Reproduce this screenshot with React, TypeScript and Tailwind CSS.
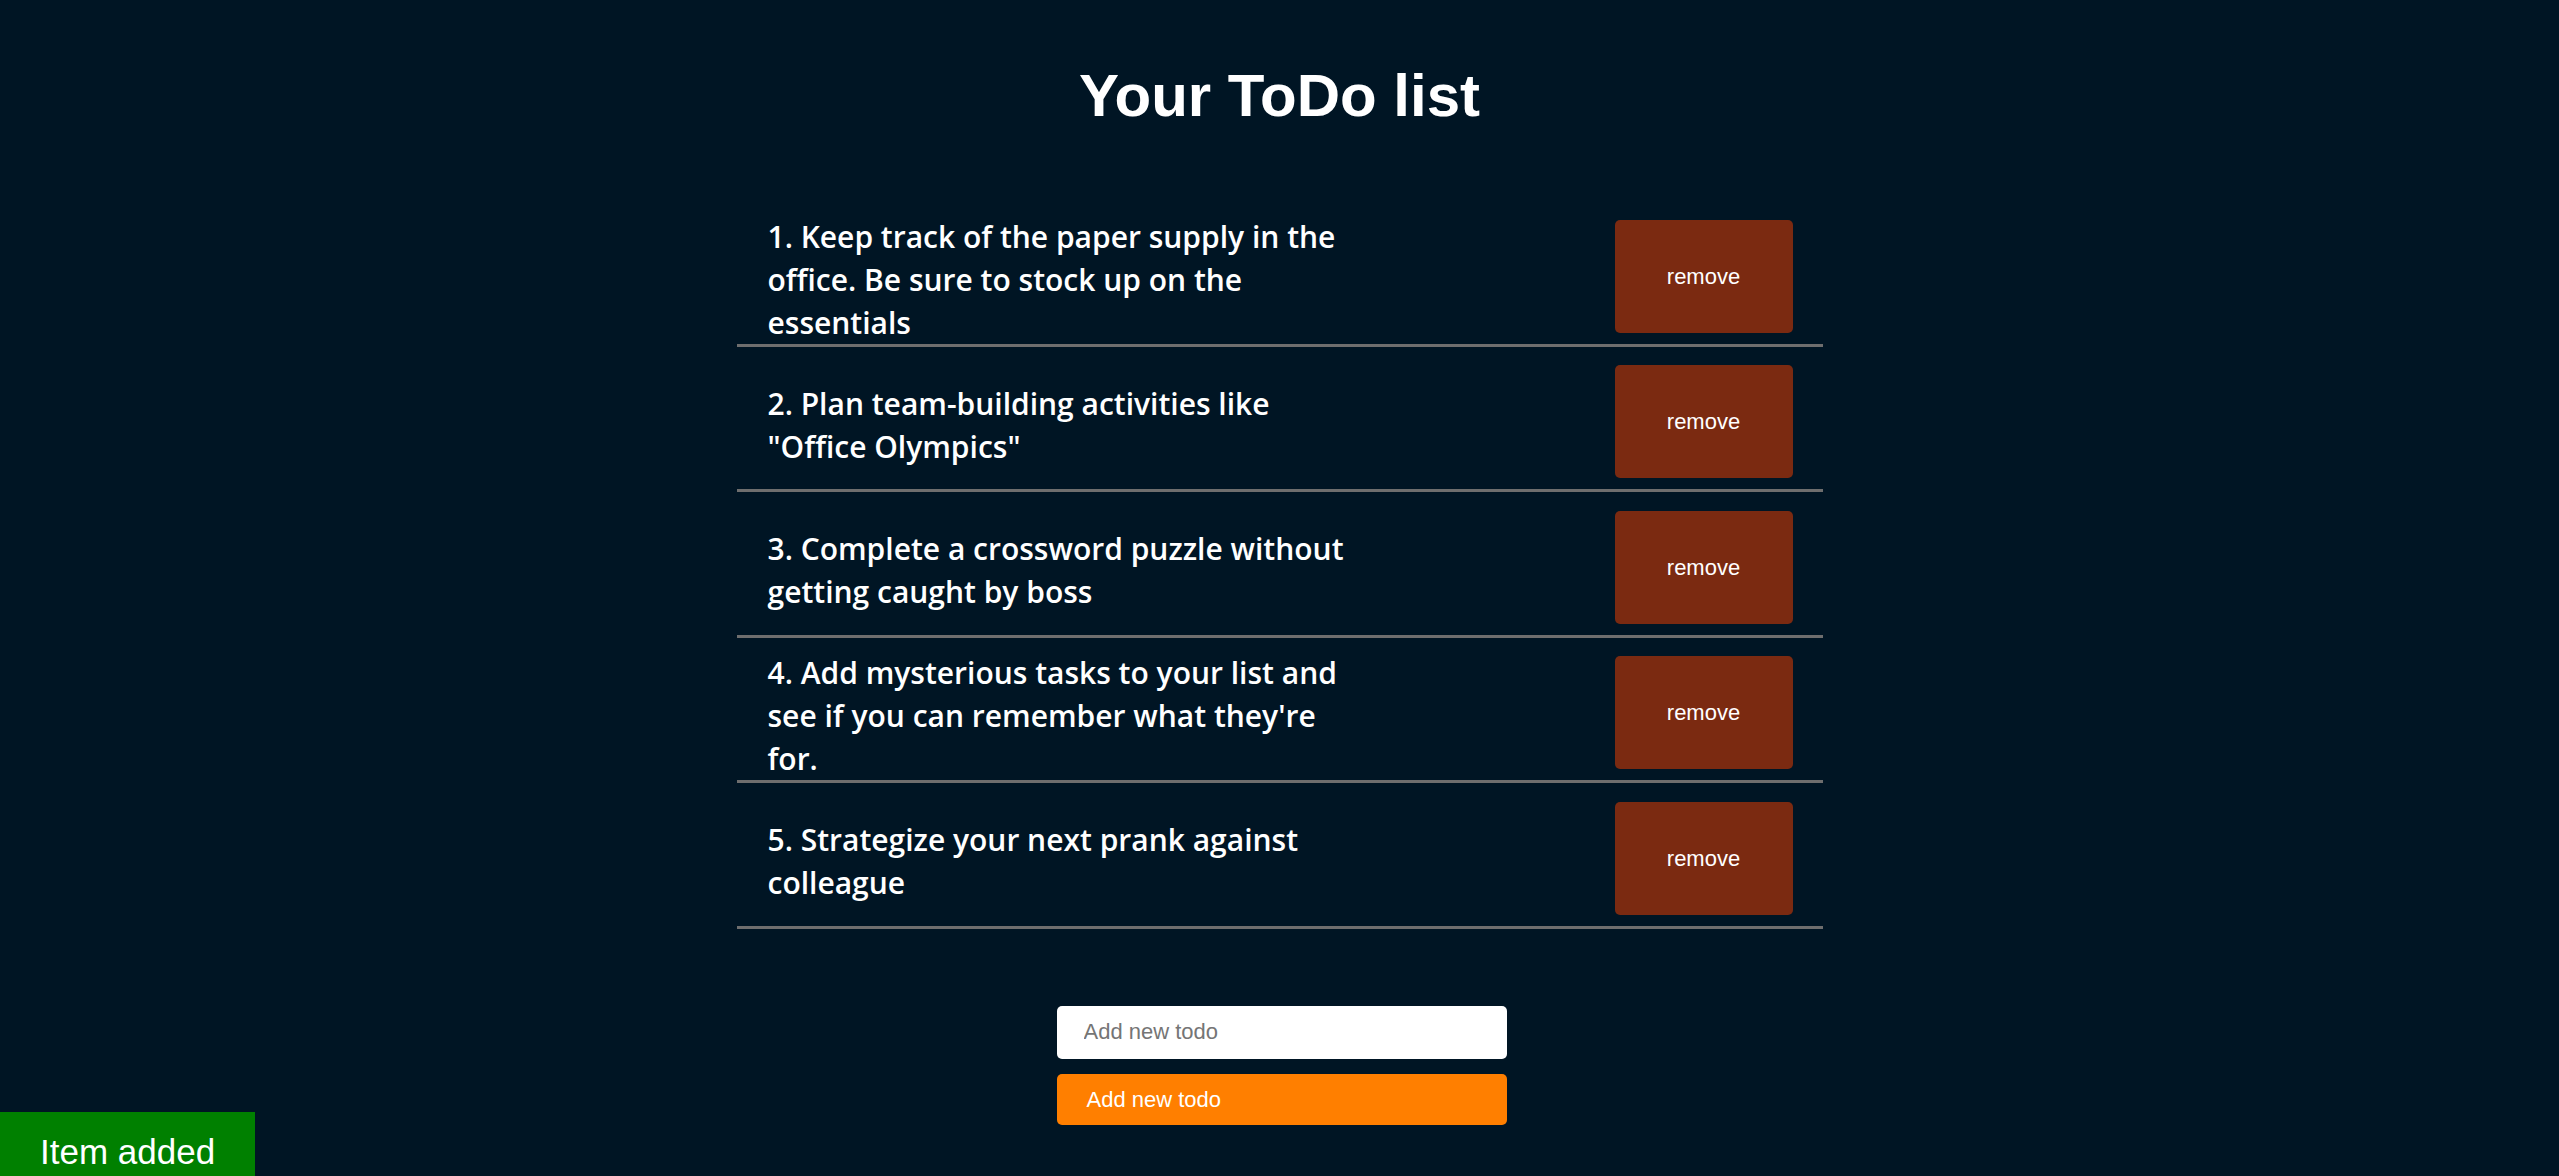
const todos = [
  'Keep track of the paper supply in the office. Be sure to stock up on the essentials',
  'Plan team-building activities like "Office Olympics"',
  'Complete a crossword puzzle without getting caught by boss',
  "Add mysterious tasks to your list and see if you can remember what they're for.",
  'Strategize your next prank against colleague',
];

function TodoRow({ index, text }: { index: number; text: string }) {
  return (
    <li className="flex h-[145.5px] items-center justify-between border-b-[3px] border-[#6e6e6e] pl-[31px] pr-[30px] pt-[8px]">
      <p className="w-[600px] pt-[6px] font-['Open_Sans',sans-serif] text-[30px] font-semibold leading-[43px] text-white">
        {index}. {text}
      </p>
      <button className="h-[113px] w-[178px] rounded-[5px] bg-[#7b2a11] text-[22px] text-white">
        remove
      </button>
    </li>
  );
}

export default function App() {
  return (
    <div className="min-h-screen bg-[#001524] font-['Liberation_Sans',Arial,sans-serif]">
      <h1 className="pt-[61px] text-center text-[60px] font-bold leading-[69px] text-white">
        Your ToDo list
      </h1>

      <ul className="mx-auto mt-[71px] w-[1086px]">
        {todos.map((t, i) => (
          <TodoRow key={i} index={i + 1} text={t} />
        ))}
      </ul>

      <div className="mx-auto mt-[77px] flex w-[450px] flex-col gap-[15px] pl-[2px]">
        <input
          type="text"
          placeholder="Add new todo"
          className="h-[53px] w-[450px] rounded-[5px] bg-white pl-[27px] text-[22px] text-black outline-none placeholder:text-[#757575]"
        />
        <button className="h-[51px] w-[450px] rounded-[5px] bg-[#ff7f00] pl-[30px] text-left text-[22px] text-white">
          Add new todo
        </button>
      </div>

      <div className="fixed bottom-[-16px] left-0 bg-[#008000] px-10 py-5 text-[35px] leading-[40px] text-white">
        Item added
      </div>
    </div>
  );
}
